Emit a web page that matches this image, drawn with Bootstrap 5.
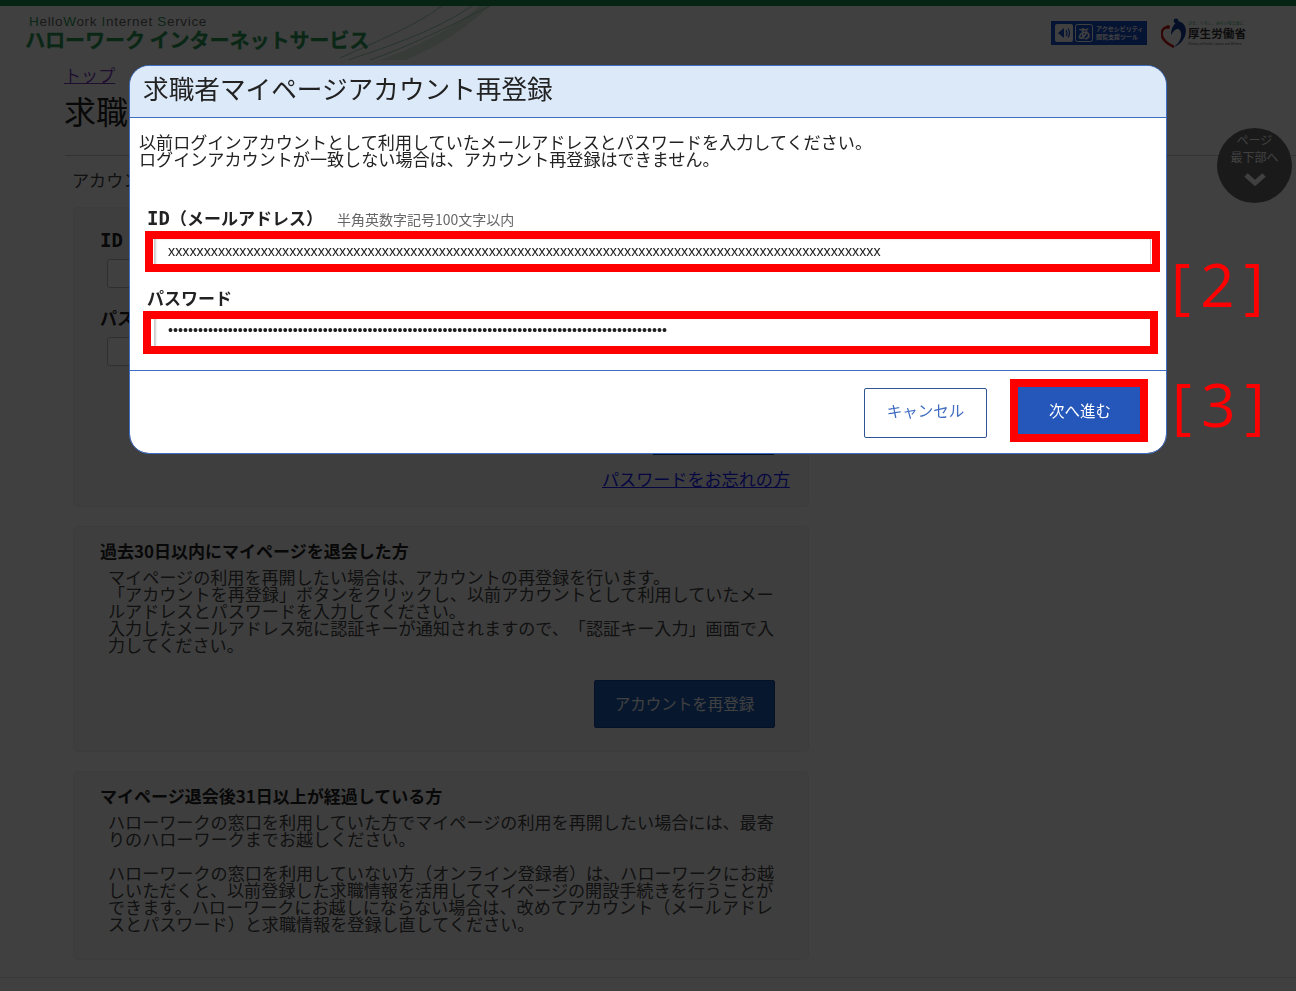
<!DOCTYPE html>
<html lang="ja">
<head>
    <meta charset="UTF-8">
    <meta name="viewport" content="width=device-width, initial-scale=1.0">
    <title>求職者マイページアカウント再登録</title>
    <link href="https://cdn.jsdelivr.net/npm/bootstrap@5.3.0/dist/css/bootstrap.min.css" rel="stylesheet">
    <style>
        body { font-family: "Noto Sans CJK JP", sans-serif; font-size: 17.1px; line-height: 17px; color: #444; background: #fff; text-spacing-trim: space-all; }
        .top-strip { height: 6px; background: #1a8a4c; }
        .site-header { height: 54px; padding-left: 25px; padding-right: 50px; }
        .logo-en { font-family: "Liberation Sans", sans-serif; font-size: 13.5px; line-height: 15px; padding: 8px 0 0 4px; color: #666; letter-spacing: .68px; }
        .logo-en b { font-weight: 400; color: #2a9c58; }
        .logo-ja { font-size: 20.1px; line-height: 22px; font-weight: 700; color: #2a9c58; white-space: nowrap; -webkit-text-stroke: .3px #2a9c58; letter-spacing: -.1px; }
        .swoosh { position: absolute; left: 340px; top: 6px; opacity: .45; }
        .head-tools { padding-top: 12px; gap: 14px; }
        .tool-badge { width: 96px; height: 24px; padding-left: 4px; gap: 3px; background: #1a4fd0; color: #fff; }
        .tool-badge svg { flex: none; }
        .tool-badge small { font-size: 6px; line-height: 8px; font-weight: 700; display: block; white-space: nowrap; }
        .gov-logo { gap: 1px; }
        .gov-logo svg { flex: none; }
        .gov-text { width: 58px; overflow: hidden; }
        .gov-name { font-size: 11.6px; line-height: 15px; font-weight: 700; color: #333; white-space: nowrap; }
        .gov-sub { font-size: 4px; line-height: 6px; color: #2a9c58; white-space: nowrap; }
        .gov-en { font-size: 3px; line-height: 6px; color: #555; white-space: nowrap; }
        .page-body { padding: 5px 0 0 64px; }
        .crumb a { color: #7a3fc0; }
        .crumb { height: 20px; line-height: 20px; }
        .page-title { font-size: 32px; line-height: 40px; font-weight: 400; color: #222; margin: 5px 0 25px; white-space: nowrap; }
        .title-rule { border-top: 1px solid #ccc; margin: 0 0 15px 1px; }
        .lead-text { padding-left: 8px; margin-bottom: 19px; }
        .info-box { width: 736px; margin-left: 9px; margin-bottom: 19px; background: #f7f7f7; border: 1px solid #eee; border-radius: 5px; padding: 13px 33px 0 26px; }
        .info-box h2 { font-size: 17px; line-height: 22px; font-weight: 700; color: #222; margin: 0 0 6px; }
        .info-box p { padding-left: 8px; margin: 0; white-space: nowrap; }
        .box-login { height: 300px; padding-top: 21px; }
        .box-login h2 { margin-bottom: 8px; }
        .dim-input { width: 300px; height: 29px; margin: 0 0 19px 7px; background: #fff; border: 1px solid #bbb; border-radius: 3px; }
        .box-return { height: 226px; }
        .box-gone { height: 189px; margin-bottom: 17px; }
        .dark-btn { background: #1e5bb8; border: 1px solid #174a96; color: #fff; width: 181px; height: 48px; border-radius: 2px; font-size: 15.5px; padding: 0 0 2px; }
        .login-btn { width: 123px; margin-top: 22px; }
        .forgot-row { margin: 15px -15px 0 0; }
        .forgot { color: #1a1aff; }
        .return-row { margin-top: 27px; }
        .page-end { border-top: 1px solid #ddd; }
        .jump-btn { position: absolute; left: 1217px; top: 128px; width: 75px; height: 75px; border-radius: 50%; background: #686868; color: #fff; font-size: 12px; line-height: 17px; padding-top: 3px; }
        .jump-btn svg { margin-top: 7px; }

        .modal-backdrop.show { opacity: .75; }
        .reg-dialog { max-width: none; width: 1038px; margin: 65px 0 0 129px; }
        .reg-dialog .modal-content { border: 1px solid #3f6fc4; border-radius: 20px; overflow: hidden; color: #222; }
        .reg-dialog .modal-header { background: #dce9f9; height: 52px; padding: 0 13px 8px; border-bottom: 1px solid #3f6fc4; border-radius: 0; }
        .reg-dialog .modal-title { font-size: 25.65px; line-height: 34px; font-weight: 400; }
        .reg-dialog .modal-body { padding: 15px 15px 23px 9px; flex: none; }
        .reg-dialog .modal-footer { height: 83px; padding: 0 26px 0 0; border-top: 1px solid #3f6fc4; border-radius: 0; gap: 31px; align-items: start; }
        .reg-dialog .modal-footer > * { margin: 0; }
        .intro-text { height: 74px; margin: 0; }
        .field-label { display: block; font-size: 17px; line-height: 22px; font-weight: 700; margin: 0 0 7px 8px; }
        .field-label small { font-size: 14px; font-weight: 400; color: #666; margin-left: 14px; }
        .id-mono { font-family: "DejaVu Sans Mono", monospace; font-size: 19px; }
        .field-input.form-control { width: 997px; height: 31px; margin-left: 15px; margin-bottom: 19px; padding: 0 0 3px 13px; border: 1px solid #ccc; border-radius: 0; box-shadow: inset 1px 1px 2px #ccc; font-family: "Liberation Sans", sans-serif; font-size: 14.25px; color: #222; }
        .field-input.last-field { margin-bottom: 0; }
        .cancel-btn.btn { width: 123px; height: 50px; margin-top: 17px !important; padding: 0 0 4px; background: #fff; border: 1px solid #2f5597; border-radius: 2px; color: #3f6cc0; font-size: 15.5px; }
        .next-btn.btn { width: 122px; height: 50px; margin-top: 16px !important; padding: 0 0 2px 2px; background: #2557ba; border: 1px solid #2557ba; border-radius: 0; color: #fff; font-size: 15.5px; }
        .red-box { position: absolute; border: 8px solid #f00; pointer-events: none; }
        .red-id { left: 16px; top: 166px; width: 1015px; height: 41px; }
        .red-pw { left: 14px; top: 246px; width: 1015px; height: 43px; }
        .red-next { left: 881px; top: 314px; width: 138px; height: 63px; }
        .step-tag { position: absolute; color: #f00; font-family: "Open Sans", sans-serif; font-weight: 400; font-size: 60px; line-height: 60px; letter-spacing: 9.5px; white-space: nowrap; }
        .tag-2 { left: 1042px; top: 189px; }
        .tag-3 { left: 1043px; top: 309px; }
    </style>
</head>
<body class="overflow-hidden">
    <div class="top-strip"></div>
    <header class="site-header d-flex justify-content-between align-items-start">
        <div>
            <div class="logo-en"><b>H</b>ello<b>W</b>ork <b>I</b>nternet <b>S</b>ervice</div>
            <div class="logo-ja">ハローワーク インターネットサービス</div>
        </div>
        <div class="head-tools d-flex align-items-center">
            <div class="tool-badge d-flex align-items-center">
                <svg width="38" height="20" viewBox="0 0 38 20">
                    <rect x="0" y="1" width="18" height="18" rx="2" fill="#fff"/>
                    <path d="M3 10 9 5v10z" fill="#1a4fd0"/>
                    <path d="M11 7q2 3 0 6M13 5.500q3 4.500 0 9" fill="none" stroke="#1a4fd0" stroke-width="1.200"/>
                    <rect x="20.500" y="1.500" width="17" height="17" rx="2" fill="none" stroke="#fff"/>
                    <text x="29" y="15" text-anchor="middle" font-size="13" font-weight="700" fill="#fff">あ</text>
                </svg>
                <div><small>アクセシビリティ</small><small>閲覧支援ツール</small></div>
            </div>
            <div class="gov-logo d-flex align-items-center">
                <svg width="26" height="30" viewBox="0 0 26 30">
                    <path d="M8 9C2 9 0 13 1 18c1 4 6 8 12 11" fill="none" stroke="#c8201c" stroke-width="2.600"/>
                    <path d="M17 3c8 2 9 9 7 15-2 5-6 9-11 11 5-4 8-9 7-14-1-4-3-5-6-3-2 2-3 3-4 5 0-6 2-10 7-14z" fill="#123a9a"/>
                    <circle cx="7" cy="9" r="2" fill="#c8201c"/>
                    <circle cx="15" cy="3" r="2.400" fill="#123a9a"/>
                </svg>
                <div class="gov-text">
                    <div class="gov-sub">ひと、くらし、みらいのために</div>
                    <div class="gov-name">厚生労働省</div>
                    <div class="gov-en">Ministry of Health, Labour and Welfare</div>
                </div>
            </div>
        </div>
    </header>
    <svg class="swoosh" width="150" height="54" viewBox="0 0 150 54">
        <path d="M8 54C50 40 95 25 132 0M30 54C70 40 110 20 150 0M0 52C40 34 75 20 102 0" fill="none" stroke="#2a9c58" stroke-width="1"/>
        <path d="M40 54C80 40 115 20 140 0L150 0C120 28 90 44 66 54z" fill="#2a9c58" opacity=".35"/>
    </svg>

    <main class="page-body">
        <div class="crumb"><a href="#">トップ</a></div>
        <h1 class="page-title">求職者マイページ</h1>
        <div class="title-rule"></div>
        <div class="lead-text">アカウント</div>

        <section class="info-box box-login">
            <h2><span class="id-mono">ID</span></h2>
            <div class="dim-input"></div>
            <h2>パスワード</h2>
            <div class="dim-input"></div>
            <div class="text-end">
                <button class="dark-btn login-btn" type="button">ログイン</button>
                <div class="forgot-row"><a class="forgot" href="#">パスワードをお忘れの方</a></div>
            </div>
        </section>

        <section class="info-box box-return">
            <h2>過去30日以内にマイページを退会した方</h2>
            <p>マイページの利用を再開したい場合は、アカウントの再登録を行います。<br>「アカウントを再登録」ボタンをクリックし、以前アカウントとして利用していたメー<br>ルアドレスとパスワードを入力してください。<br>入力したメールアドレス宛に認証キーが通知されますので、「認証キー入力」画面で入<br>力してください。</p>
            <div class="text-end return-row"><button class="dark-btn" type="button">アカウントを再登録</button></div>
        </section>

        <section class="info-box box-gone">
            <h2>マイページ退会後31日以上が経過している方</h2>
            <p>ハローワークの窓口を利用していた方でマイページの利用を再開したい場合には、最寄<br>りのハローワークまでお越しください。<br><br>ハローワークの窓口を利用していない方（オンライン登録者）は、ハローワークにお越<br>しいただくと、以前登録した求職情報を活用してマイページの開設手続きを行うことが<br>できます。ハローワークにお越しにならない場合は、改めてアカウント（メールアドレ<br>スとパスワード）と求職情報を登録し直してください。</p>
        </section>
    </main>
    <div class="page-end"></div>

    <div class="jump-btn d-flex flex-column align-items-center">
        <span>ページ</span>
        <span>最下部へ</span>
        <svg width="24" height="16" viewBox="0 0 24 16"><path d="M3 3 12 11 21 3" fill="none" stroke="#fff" stroke-width="5"/></svg>
    </div>

    <div class="modal-backdrop show"></div>
    <div class="modal d-block" tabindex="-1">
        <div class="modal-dialog reg-dialog">
            <div class="modal-content">
                <div class="modal-header">
                    <h5 class="modal-title">求職者マイページアカウント再登録</h5>
                </div>
                <div class="modal-body">
                    <p class="intro-text">以前ログインアカウントとして利用していたメールアドレスとパスワードを入力してください。<br>ログインアカウントが一致しない場合は、アカウント再登録はできません。</p>
                    <label class="field-label" for="loginId"><span class="id-mono">ID</span>（メールアドレス）<small>半角英数字記号100文字以内</small></label>
                    <input class="form-control field-input" id="loginId" type="text">
                    <label class="field-label" for="loginPw">パスワード</label>
                    <input class="form-control field-input last-field" id="loginPw" type="password">
                </div>
                <div class="modal-footer">
                    <button class="btn cancel-btn" type="button">キャンセル</button>
                    <button class="btn next-btn" type="button">次へ進む</button>
                </div>
            </div>
            <div class="red-box red-id"></div>
            <div class="red-box red-pw"></div>
            <div class="red-box red-next"></div>
            <div class="step-tag tag-2">[2]</div>
            <div class="step-tag tag-3">[3]</div>
        </div>
    </div>

    <script src="https://cdn.jsdelivr.net/npm/bootstrap@5.3.0/dist/js/bootstrap.bundle.min.js"></script>
    <script>
        // both fields hold 100 characters
        document.getElementById('loginId').value = 'x'.repeat(100);
        document.getElementById('loginPw').value = 'x'.repeat(100);
    </script>
</body>
</html>
